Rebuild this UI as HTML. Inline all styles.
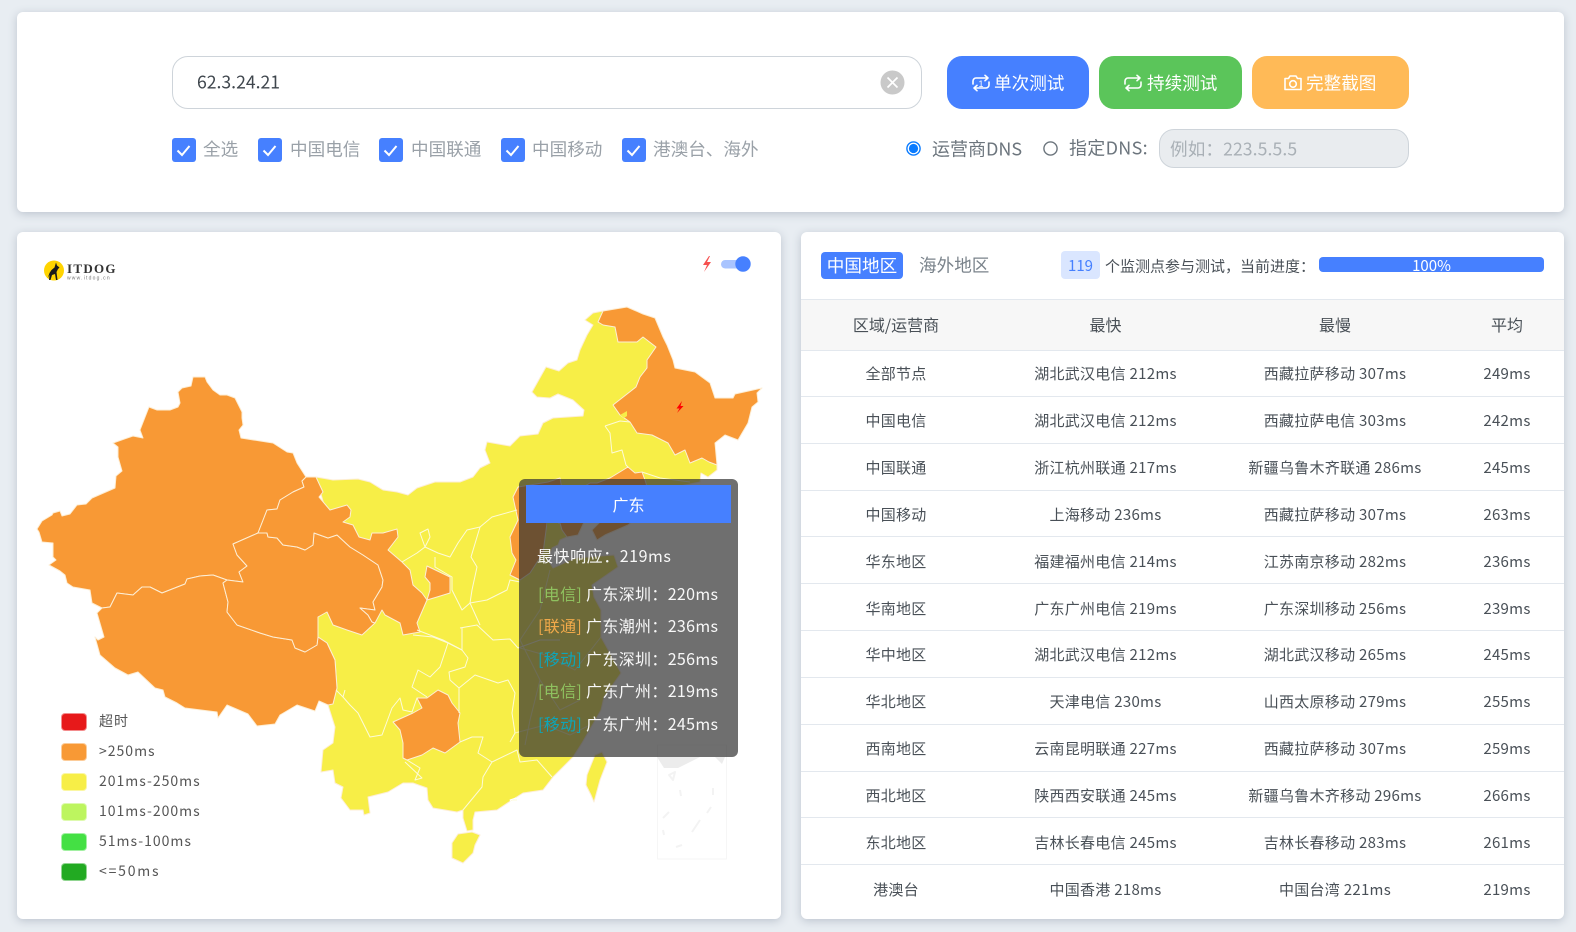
<!DOCTYPE html>
<html lang="zh">
<head>
<meta charset="utf-8">
<title>ITDOG</title>
<style>
html,body{margin:0;padding:0;width:1576px;height:932px;overflow:hidden;background:#e8edf2;font-family:"Noto Sans CJK SC","Liberation Sans",sans-serif;color:#495057}
.card{position:absolute;background:#fff;border-radius:6px;box-shadow:0 2px 9px rgba(95,110,130,.32)}
.t{position:absolute;white-space:nowrap;transform:translateY(-50%);line-height:1.4}
.btn{position:absolute;top:56px;height:53px;border-radius:15px}
.cb{position:absolute;top:138px;width:24px;height:24px;border-radius:3px;background:#4680ff}
.cb svg{display:block}
.lb{font-size:17.6px;color:#9aa1a8;top:150px}
.sw{position:absolute;left:61px;width:24px;height:16px;border-radius:4px;border:1px solid rgba(255,255,255,.5)}
.lg{left:99px;font-size:14px;letter-spacing:1px;color:#555}
table{position:absolute;left:801px;top:350px;width:763px;border-collapse:collapse;table-layout:fixed;font-size:15px;color:#495057}
td{height:43.85px;padding:2px 0 0;text-align:center;border-bottom:1px solid #e3e8ee;letter-spacing:.28px;white-space:nowrap;line-height:1}
tr:last-child td{border-bottom:none;height:49px;padding:0}
.tip{position:absolute;left:519px;top:479px;width:219px;height:278px;background:rgba(50,50,50,.7);border-radius:6px;color:#fff;z-index:5}
.tip .h{position:absolute;left:7px;top:6px;width:205px;height:38px;background:#4680ff;text-align:center;line-height:38px;font-size:16px}
.tip .t{font-size:16px;color:#f8f8f8;letter-spacing:.33px}
.dx{color:#8fc15f}.lt{color:#f0a94a}.yd{color:#0ea5b8}
</style>
</head>
<body>
<div class="card" style="left:17px;top:12px;width:1547px;height:200px"></div>
<div class="card" style="left:17px;top:232px;width:764px;height:687px"></div>
<div class="card" style="left:801px;top:232px;width:763px;height:687px"></div>

<!-- top form -->
<div style="position:absolute;left:172px;top:56px;width:748px;height:51px;border:1px solid #ced4da;border-radius:16px"></div>
<span class="t" style="left:197px;top:83px;font-size:17.6px;color:#3f464d">62.3.24.21</span>
<svg style="position:absolute;left:880px;top:70px" width="25" height="25"><circle cx="12.5" cy="12.5" r="12" fill="#c9c9c9"/><path d="M7.5 7.5l10 10M17.5 7.5l-10 10" stroke="#fff" stroke-width="1.7"/></svg>

<div class="btn" style="left:947px;width:142px;background:#4680ff"></div>
<div class="btn" style="left:1099px;width:143px;background:#5bc55a"></div>
<div class="btn" style="left:1252px;width:157px;background:#ffba57"></div>
<svg style="position:absolute;left:0;top:0" width="1576" height="200" fill="none" stroke="#fff" stroke-width="1.6" stroke-linecap="round" stroke-linejoin="round">
<g transform="translate(981,83)"><path d="M-8 1V-2a3 3 0 0 1 3-3H7M4-7.7L7-5 4-2.3"/><path d="M8-1V2a3 3 0 0 1-3 3H-7M-4 7.7L-7 5-4 2.3"/></g>
<text x="981" y="87" font-size="9" fill="#fff" stroke="none" text-anchor="middle" font-family="Liberation Sans">1</text>
<g transform="translate(1133,83)"><path d="M-8 1V-2a3 3 0 0 1 3-3H7M4-7.7L7-5 4-2.3"/><path d="M8-1V2a3 3 0 0 1-3 3H-7M-4 7.7L-7 5-4 2.3"/></g>
<g transform="translate(1293,83)"><path d="M-8-4.5H-4.5L-3-7H3L4.5-4.5H8V6.5H-8Z"/><circle cx="0" cy="1" r="3.3"/></g>
</svg>
<span class="t" style="left:994px;top:84px;font-size:17.6px;color:#fff">单次测试</span>
<span class="t" style="left:1147px;top:84px;font-size:17.6px;color:#fff">持续测试</span>
<span class="t" style="left:1306px;top:84px;font-size:17.6px;color:#fff">完整截图</span>

<div class="cb" style="left:172px"><svg width="24" height="24"><path d="M5.500 12.500l4.500 4.500L17.500 8" fill="none" stroke="#fff" stroke-width="2"/></svg></div>
<span class="t lb" style="left:203px">全选</span>
<div class="cb" style="left:258px"><svg width="24" height="24"><path d="M5.500 12.500l4.500 4.500L17.500 8" fill="none" stroke="#fff" stroke-width="2"/></svg></div>
<span class="t lb" style="left:290px">中国电信</span>
<div class="cb" style="left:379px"><svg width="24" height="24"><path d="M5.500 12.500l4.500 4.500L17.500 8" fill="none" stroke="#fff" stroke-width="2"/></svg></div>
<span class="t lb" style="left:411px">中国联通</span>
<div class="cb" style="left:501px"><svg width="24" height="24"><path d="M5.500 12.500l4.500 4.500L17.500 8" fill="none" stroke="#fff" stroke-width="2"/></svg></div>
<span class="t lb" style="left:532px">中国移动</span>
<div class="cb" style="left:622px"><svg width="24" height="24"><path d="M5.500 12.500l4.500 4.500L17.500 8" fill="none" stroke="#fff" stroke-width="2"/></svg></div>
<span class="t lb" style="left:653px">港澳台、海外</span>

<svg style="position:absolute;left:905px;top:140px" width="160" height="18"><circle cx="8.5" cy="8.5" r="6.6" fill="#fff" stroke="#0a7bff" stroke-width="1.4"/><circle cx="8.5" cy="8.5" r="4.6" fill="#0a7bff"/><circle cx="145.500" cy="8.5" r="6.6" fill="#fff" stroke="#6c757d" stroke-width="1.4"/></svg>
<span class="t" style="left:932px;top:149px;font-size:18px;color:#6c757d">运营商DNS</span>
<span class="t" style="left:1069px;top:148px;font-size:18px;letter-spacing:.3px;color:#6c757d">指定DNS:</span>
<div style="position:absolute;left:1159px;top:129px;width:248px;height:37px;background:#e9ecef;border:1px solid #ced4da;border-radius:15px"></div>
<span class="t" style="left:1170px;top:150px;font-size:17.6px;letter-spacing:.1px;color:#a9b0b6">例如：223.5.5.5</span>

<!-- logo -->
<svg style="position:absolute;left:40px;top:255px" width="85" height="30">
<circle cx="14" cy="15.5" r="10" fill="#ffd400"/>
<path d="M7 25l2.500-7 2-3 3-2.500 1.500-5 1 3 2.500 2-1.500 1.500-1.500 3 1 8h-1.500l-1-6-3 1-1.500 5h-1.500l.500-5-2 3.500z" fill="#1a1a1a"/>
<text x="27" y="18" font-family="Liberation Serif" font-weight="bold" font-size="13" letter-spacing="1.300" fill="#333">ITDOG</text>
<text x="27" y="24.500" font-family="Liberation Sans" font-size="5" letter-spacing="1.200" fill="#777">www.itdog.cn</text>
</svg>

<!-- toggle -->
<svg style="position:absolute;left:699px;top:252px" width="60" height="24">
<polygon points="10,4 4,13 8,13 5,20 12,10 8,10 11,4" fill="#f6504f"/>
<rect x="22" y="8" width="26" height="8.500" rx="4.200" fill="#a9c4ff"/>
<circle cx="44" cy="12" r="7.700" fill="#4680ff"/>
</svg>

<!-- map -->
<svg style="position:absolute;left:0;top:0" width="781" height="919">
<g stroke="#fdeed5" stroke-width="1" stroke-linejoin="round">
<!-- inset -->
<rect x="657.500" y="745" width="69" height="114" fill="none" stroke="#f6f6f6"/>
<path d="M657 757L664 768 678 768 700 757ZM715 757L722 764 725 757Z" fill="#ececec" stroke="none"/>
<path d="M669 775l6-3-2 8zM680 790l1 6M713 788l0 7M669 812l-6 6M711 807l-4 6M663 830l1 5M700 820l-8 12M682 845l-6 2" stroke="#f3f3f3" fill="none" stroke-width="2"/>
<!-- yellow base -->
<polygon fill="#f7ee47" points="316,477 333,480 358,479 370,482 383,490 397,492 408,495 417,488 435,482 460,482 473,477 480,468 490,463 485,450 487,442 510,446 520,436 538,434 543,423 553,418 583,416 584,410 573,400 558,394 550,398 537,397 532,392 546,367 559,371 568,363 577,360 580,350 587,335 593,325 585,320 593,313 603,311 640,330 660,340 700,450 717,465 717,470 708,477 701,473 700,482 660,490 648,500 640,515 628,525 605,535 597,540 592,530 600,522 585,520 578,535 567,537 560,540 558,545 552,548 548,560 553,568 575,558 614,555 618,567 592,585 594,597 601,610 601,637 621,673 604,697 601,710 582,743 573,757 553,777 543,790 523,793 512,800 497,810 475,812 473,820 473,830 467,831 463,818 463,810 457,812 433,808 428,800 427,788 413,783 403,783 388,792 368,797 370,813 364,815 363,810 350,810 341,798 343,787 335,783 333,770 321,772 323,750 333,743 335,727 328,705 337,688 335,660 327,643 318,637 318,617 340,560"/>
<polygon fill="#f7ee47" points="602,752 607,762 600,780 594,802 591,795 586,785 587,775 595,755"/>
<polygon fill="#f7ee47" points="480,835 472,832 458,834 452,843 452,858 463,863 473,853 475,845"/>
<!-- xinjiang -->
<polygon fill="#f89935" points="37,529 42,521 52,515 53,513 60,511 62,516 70,514 77,505 86,504 92,498 115,488 116,476 122,471 118,457 118,447 113,443 133,436 143,438 140,430 149,407 157,410 170,410 178,407 180,403 178,392 182,388 191,386 193,377 205,377 207,382 213,390 220,395 227,395 235,398 242,412 242,418 243,425 239,430 241,438 273,443 287,452 293,453 297,463 306,477 302,481 304,487 293,492 280,500 277,509 267,510 258,533 233,544 237,555 247,566 239,572 243,582 227,580 213,575 200,576 187,579 185,584 162,593 150,587 142,587 133,595 117,593 110,607 102,608 92,603 90,590 73,587 67,583 65,575 60,571 49,565 56,560 53,557 53,543 42,542 39,532"/>
<!-- tibet -->
<polygon fill="#f89935" points="102,608 110,607 117,593 133,595 142,587 150,587 162,593 185,584 187,579 200,576 213,575 227,580 223,583 228,602 227,612 237,625 260,633 273,637 292,640 295,648 305,652 317,645 318,637 327,643 335,660 337,688 333,704 328,705 319,701 315,711 297,705 280,715 275,724 257,726 248,714 227,705 218,718 217,712 185,708 177,703 165,697 163,690 155,688 138,672 128,675 115,668 100,655 95,637 98,640 104,637 97,613"/>
<!-- qinghai -->
<polygon fill="#f89935" points="258,533 267,533 268,537 277,538 283,545 297,547 305,550 313,545 314,533 328,538 337,535 350,547 363,555 378,565 383,580 382,587 373,602 375,610 360,608 368,615 372,622 375,623 362,635 347,630 333,625 327,612 318,617 318,637 317,645 305,652 295,648 292,640 273,637 260,633 237,625 227,612 228,602 223,583 227,580 243,582 239,572 247,566 237,555 233,544"/>
<!-- gansu -->
<polygon fill="#f89935" points="306,477 316,477 323,492 319,497 330,510 347,505 351,510 350,517 343,522 353,525 359,537 370,540 372,533 383,533 397,529 398,537 388,550 402,562 410,570 413,585 422,593 427,600 417,623 420,632 403,635 400,623 385,615 382,610 375,623 372,622 368,615 360,608 375,610 373,602 382,587 383,580 378,565 363,555 350,547 337,535 328,538 314,533 313,545 305,550 297,547 283,545 277,538 268,537 267,533 258,533 267,510 277,509 280,500 293,492 304,487 302,481"/>
<polygon fill="#f89935" points="427,566 425,577 430,583 430,590 427,600 437,597 450,593 450,583 450,577"/>
<!-- guizhou -->
<polygon fill="#f89935" points="393,722 413,713 422,708 417,698 427,698 438,690 448,695 452,703 460,713 458,723 460,742 445,753 433,748 422,755 407,760 403,758 403,743 400,730"/>
<!-- heilongjiang -->
<polygon fill="#f89935" points="603,311 627,307 643,314 655,318 663,337 667,345 673,360 675,368 695,372 710,383 715,398 733,398 735,394 762,388 757,393 758,402 752,407 748,423 738,440 725,435 715,443 717,465 709,462 702,458 690,463 685,450 675,455 668,443 652,435 637,433 630,422 620,415 613,405 636,387 640,377 647,368 647,360 656,347 643,337 637,342 618,342 615,327 603,325 598,322"/>
<polygon fill="#f7ee47" stroke="none" points="620,415 627,411 627,416 624,418"/>
<!-- behind tooltip: north china orange -->
<polygon fill="#f89935" points="513,497 518,487 548,482 560,478 562,490 575,492 590,483 597,483 610,478 628,467 635,473 642,472 645,480 648,490 640,515 628,525 605,535 597,540 592,530 600,522 585,520 578,535 567,537 562,530 560,523 547,523 543,553 530,573 520,580 510,575 516,560 512,553 510,537 518,520"/>
<polygon fill="#f7ee47" stroke="none" points="547,523 558,523 558,542 547,543"/>
</g>
<!-- province borders -->
<g fill="none" stroke="#fdfbd8" stroke-width="1" stroke-linejoin="round">
<path d="M605,426L610,433 612,453 622,450 626,465 628,467M605,426L620,421 630,422M642,472L660,478 690,482"/>
<path d="M343,697L350,705 358,713 370,737 382,735 392,708 400,698 403,710 412,712 417,698"/>
<path d="M336,690L343,697 345,690"/>
<path d="M413,635L433,637 448,643 440,667 430,677 418,670 412,687 427,697"/>
<path d="M448,643L462,650 468,658 465,667 449,672 450,680 459,688 459,713"/>
<path d="M459,688L475,675 498,683 508,680 515,693 512,713 515,733 510,742"/>
<path d="M460,628L477,625 493,640 510,639 518,648 540,640 560,640"/>
<path d="M470,603L480,625M417,630L443,640 462,650 462,628M470,603L487,600 507,590 510,580 520,582"/>
<path d="M402,562L417,553 425,547 420,533 428,529 430,537 425,547 438,553 450,557 458,543 467,530 480,527 492,517 517,510"/>
<path d="M435,557L435,567 452,577 452,590 462,610 470,603M480,527L471,557 477,567 472,590 470,603"/>
<path d="M460,742L472,737 483,737 478,753 492,762 483,777 482,787 463,810"/>
<path d="M492,762L517,750 520,762 537,760 552,777"/>
<path d="M407,760L420,768 415,780 422,778 405,762M511,800L517,800"/>
<path d="M518,810L510,800 516,798" stroke="#fff"/>
<path d="M515,733L545,725 570,735 590,725M520,648L545,655 575,670 601,637M550,570L540,610 520,640 540,680 560,710 580,700M540,680L530,720 525,745" stroke-opacity=".7"/>
</g>
<!-- bolt -->
<polygon points="682,401 676.500,408.500 679.500,408.500 677,413 683.500,406 680.500,406" fill="#f00"/>
</svg>

<!-- legend -->
<div class="sw" style="top:713px;background:#e7191a"></div><span class="t lg" style="top:722px">超时</span>
<div class="sw" style="top:743px;background:#f89935"></div><span class="t lg" style="top:752px">&gt;250ms</span>
<div class="sw" style="top:773px;background:#f7ee47"></div><span class="t lg" style="top:782px">201ms-250ms</span>
<div class="sw" style="top:803px;background:#bdf55f"></div><span class="t lg" style="top:812px">101ms-200ms</span>
<div class="sw" style="top:833px;background:#44e044"></div><span class="t lg" style="top:842px">51ms-100ms</span>
<div class="sw" style="top:863px;background:#22aa22"></div><span class="t lg" style="top:872px;letter-spacing:1.800px">&lt;=50ms</span>

<!-- tooltip -->
<div class="tip">
<div class="h">广东</div>
<span class="t" style="left:18px;top:76px;letter-spacing:.55px">最快响应：219ms</span>
<span class="t" style="left:19px;top:114px"><span class="dx">[电信]</span> 广东深圳：220ms</span>
<span class="t" style="left:19px;top:146px"><span class="lt">[联通]</span> 广东潮州：236ms</span>
<span class="t" style="left:19px;top:178.500px"><span class="yd">[移动]</span> 广东深圳：256ms</span>
<span class="t" style="left:19px;top:211px"><span class="dx">[电信]</span> 广东广州：219ms</span>
<span class="t" style="left:19px;top:243.500px"><span class="yd">[移动]</span> 广东广州：245ms</span>
</div>

<!-- right header -->
<div style="position:absolute;left:821px;top:252px;width:82px;height:27px;background:#4680ff;border-radius:4px;color:#fff;font-size:17.6px;line-height:27px;text-align:center">中国地区</div>
<span class="t" style="left:919px;top:266px;font-size:17.6px;color:#7a838b">海外地区</span>
<div style="position:absolute;left:1061px;top:251px;width:39px;height:28px;background:#dae6ff;border-radius:4px;color:#4680ff;font-size:15px;line-height:30px;text-align:center">119</div>
<span class="t" style="left:1105px;top:266px;font-size:15px;color:#495057">个监测点参与测试，当前进度：</span>
<div style="position:absolute;left:1319px;top:257px;width:225px;height:15px;background:#4680ff;border-radius:4px;color:#fff;font-size:15px;line-height:17px;text-align:center">100%</div>

<div style="position:absolute;left:801px;top:299px;width:763px;height:50px;background:#f7f7f7;border-top:1px solid #e3e8ee;border-bottom:1px solid #e3e8ee"></div>
<span class="t" style="left:896px;top:324px;font-size:16px;transform:translate(-50%,-50%)">区域/运营商</span>
<span class="t" style="left:1105.500px;top:324px;font-size:16px;transform:translate(-50%,-50%)">最快</span>
<span class="t" style="left:1335px;top:324px;font-size:16px;transform:translate(-50%,-50%)">最慢</span>
<span class="t" style="left:1507px;top:324px;font-size:16px;transform:translate(-50%,-50%)">平均</span>

<table>
<colgroup><col style="width:190px"><col style="width:229px"><col style="width:230px"><col style="width:114px"></colgroup>
<tr><td>全部节点</td><td>湖北武汉电信 212ms</td><td>西藏拉萨移动 307ms</td><td>249ms</td></tr>
<tr><td>中国电信</td><td>湖北武汉电信 212ms</td><td>西藏拉萨电信 303ms</td><td>242ms</td></tr>
<tr><td>中国联通</td><td>浙江杭州联通 217ms</td><td>新疆乌鲁木齐联通 286ms</td><td>245ms</td></tr>
<tr><td>中国移动</td><td>上海移动 236ms</td><td>西藏拉萨移动 307ms</td><td>263ms</td></tr>
<tr><td>华东地区</td><td>福建福州电信 214ms</td><td>江苏南京移动 282ms</td><td>236ms</td></tr>
<tr><td>华南地区</td><td>广东广州电信 219ms</td><td>广东深圳移动 256ms</td><td>239ms</td></tr>
<tr><td>华中地区</td><td>湖北武汉电信 212ms</td><td>湖北武汉移动 265ms</td><td>245ms</td></tr>
<tr><td>华北地区</td><td>天津电信 230ms</td><td>山西太原移动 279ms</td><td>255ms</td></tr>
<tr><td>西南地区</td><td>云南昆明联通 227ms</td><td>西藏拉萨移动 307ms</td><td>259ms</td></tr>
<tr><td>西北地区</td><td>陕西西安联通 245ms</td><td>新疆乌鲁木齐移动 296ms</td><td>266ms</td></tr>
<tr><td>东北地区</td><td>吉林长春电信 245ms</td><td>吉林长春移动 283ms</td><td>261ms</td></tr>
<tr><td>港澳台</td><td>中国香港 218ms</td><td>中国台湾 221ms</td><td>219ms</td></tr>
</table>
</body>
</html>
